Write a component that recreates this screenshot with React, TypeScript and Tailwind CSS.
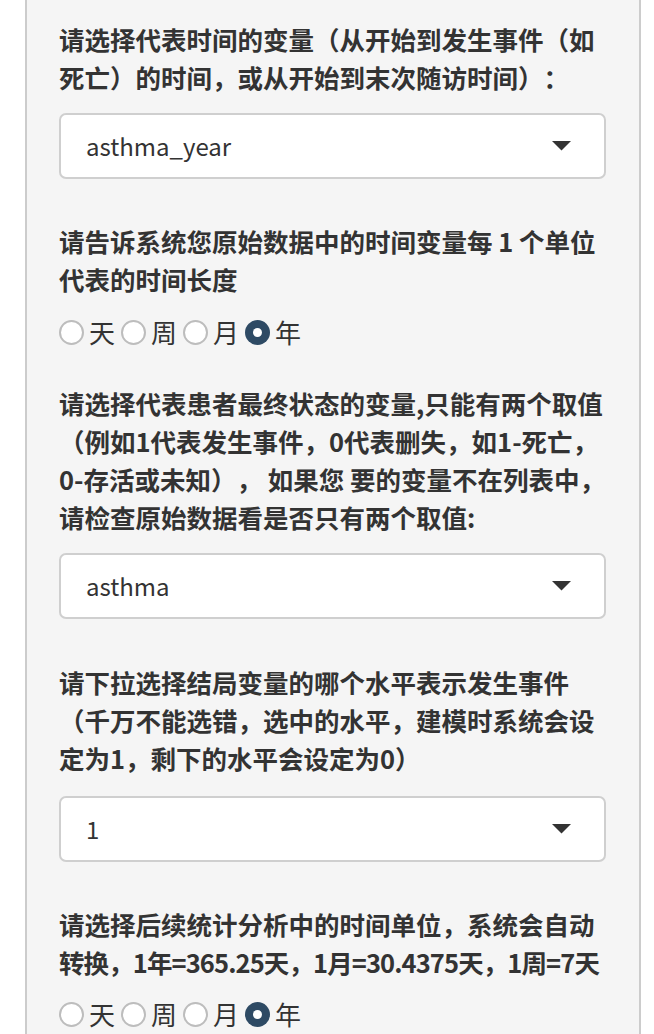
import React from 'react';

const font = { fontFamily: '"Noto Sans CJK SC", "Open Sans", sans-serif' };

function Label({ children, className = '' }: { children: React.ReactNode; className?: string }) {
  return (
    <div
      className={`text-[25.5px] leading-[38px] font-bold text-[#333] [text-spacing-trim:space-all] ${className}`}
    >
      {children}
    </div>
  );
}

function Select({ value, className = '' }: { value: string; className?: string }) {
  return (
    <div
      className={`h-[66px] flex items-center justify-between bg-white border-2 border-[#cfcfcf] rounded-[7px] pl-[25px] pr-[33px] ${className}`}
    >
      <span className="text-[24px] text-[#333]">{value}</span>
      <svg width="19" height="10" viewBox="0 0 19 10" aria-hidden>
        <path d="M0 0 H19 L9.5 9.5 Z" fill="#333" />
      </svg>
    </div>
  );
}

const units = ['天', '周', '月', '年'];

function RadioRow({ checked, className = '' }: { checked: string; className?: string }) {
  return (
    <div className={`h-[36px] flex items-center ${className}`}>
      {units.map((u) => (
        <label key={u} className="flex items-center mr-[6px]">
          {u === checked ? (
            <span className="w-[25px] h-[25px] rounded-full bg-[#2e4a64] flex items-center justify-center">
              <span className="w-[9px] h-[9px] rounded-full bg-white" />
            </span>
          ) : (
            <span className="w-[25px] h-[25px] rounded-full border-2 border-[#bdbdbd] bg-white" />
          )}
          <span className="ml-[5px] text-[26px] leading-[36px] text-[#333]">{u}</span>
        </label>
      ))}
    </div>
  );
}

export default function App() {
  return (
    <div className="bg-white min-h-[1034px] w-[654px] overflow-hidden" style={font}>
      <div className="ml-[25px] w-[616px] min-h-[1034px] bg-[#f5f5f5] border-x-2 border-[#cccccc] pl-[32px] pr-[33px] pt-[20px]">
        <Label>请选择代表时间的变量（从开始到发生事件（如死亡）的时间，或从开始到末次随访时间）：</Label>
        <Select value="asthma_year" className="mt-[17px]" />

        <Label className="mt-[43px]">请告诉系统您原始数据中的时间变量每 1 个单位代表的时间长度</Label>
        <RadioRow checked="年" className="mt-[16px]" />

        <Label className="mt-[34px]">
          请选择代表患者最终状态的变量,只能有两个取值（例如1代表发生事件，0代表删失，如1-死亡，0-存活或未知）， 如果您 要的变量不在列表中，请检查原始数据看是否只有两个取值:
        </Label>
        <Select value="asthma" className="mt-[17px]" />

        <Label className="mt-[44px]">
          请下拉选择结局变量的哪个水平表示发生事件（千万不能选错，选中的水平，建模时系统会设定为1，剩下的水平会设定为0）
        </Label>
        <Select value="1" className="mt-[19px]" />

        <Label className="mt-[43px]">
          请选择后续统计分析中的时间单位，系统会自动
          <span className="whitespace-nowrap tracking-[-0.9px]">转换，1年=365.25天，1月=30.4375天，1周=7天</span>
        </Label>
        <RadioRow checked="年" className="mt-[15px]" />
      </div>
    </div>
  );
}
